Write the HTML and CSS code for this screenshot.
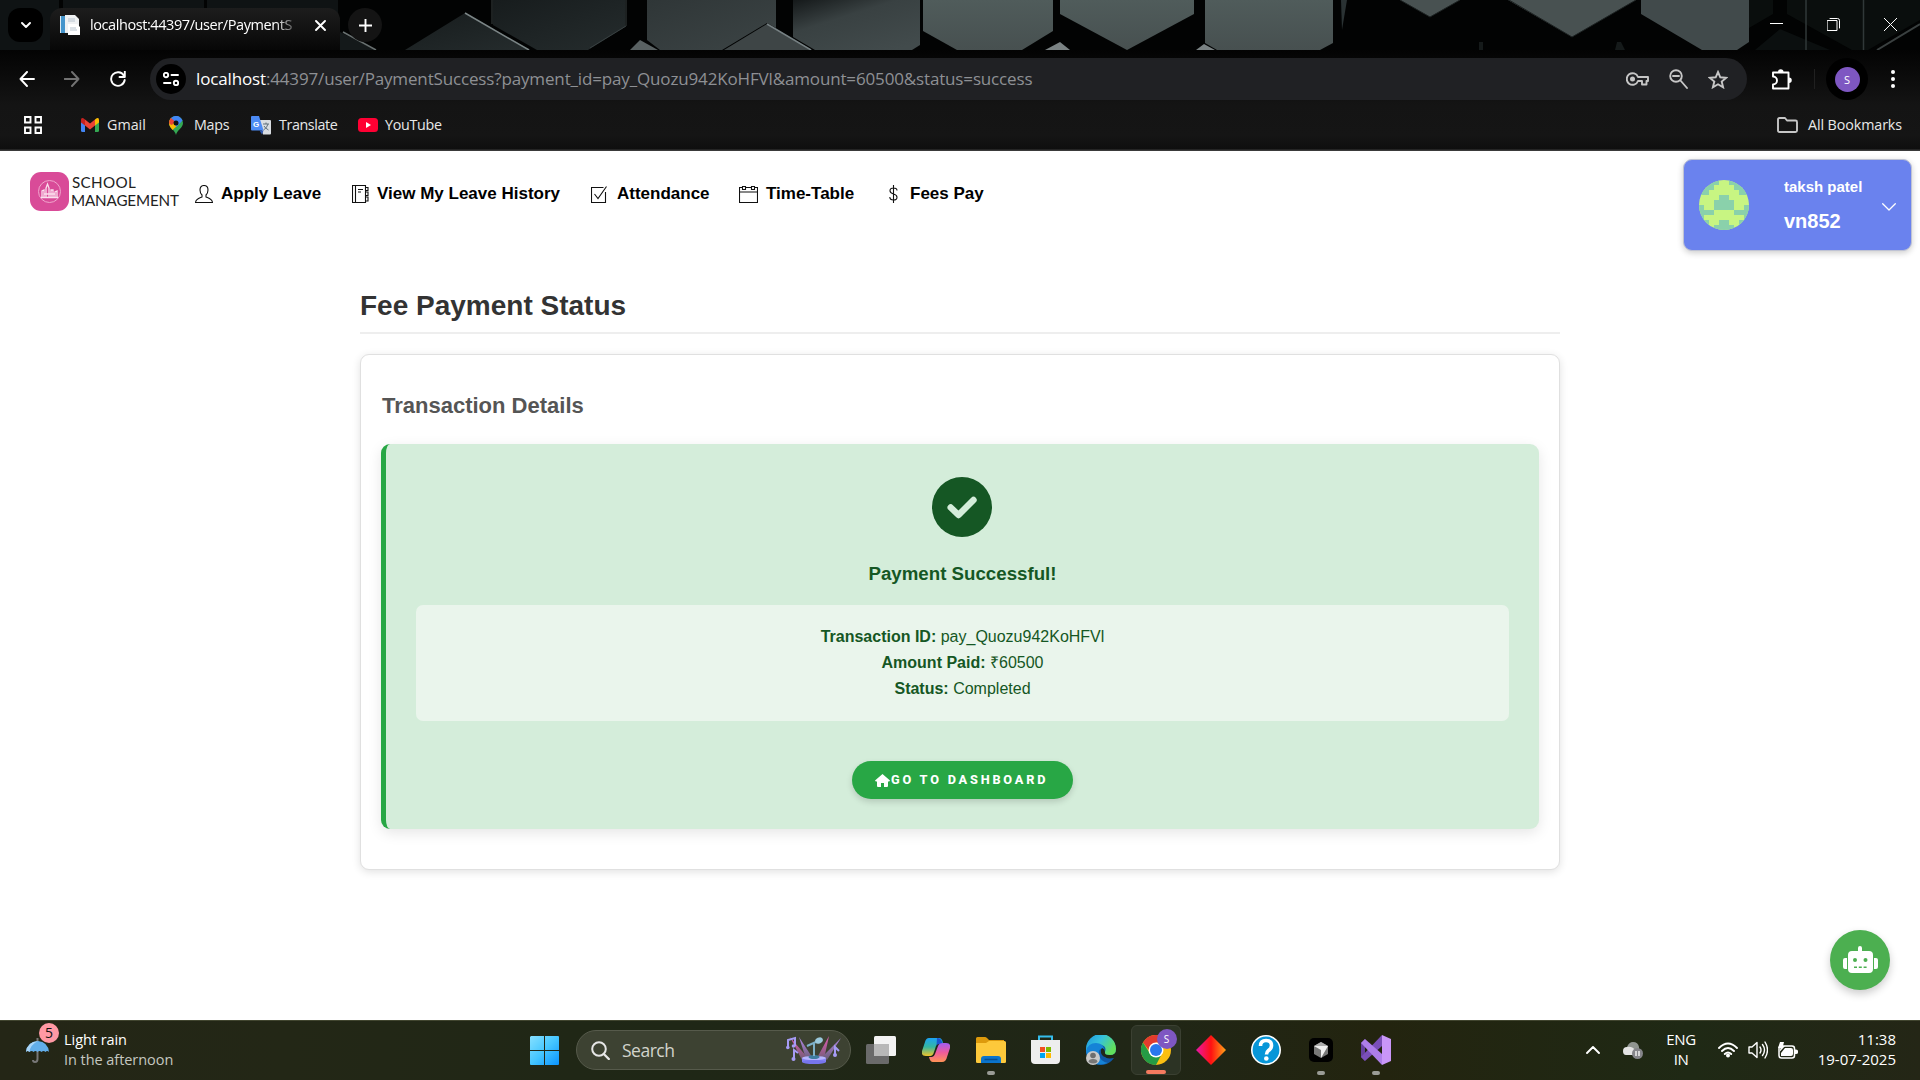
FILE: index.html
```html
<!DOCTYPE html>
<html lang="en">
<head>
<meta charset="utf-8">
<title>Fee Payment Status</title>
<link rel="stylesheet" href="styles.css">
</head>
<body>
<div class="screen">
  <header class="browser">
    <div class="tabstrip">
      <svg class="wallpaper" width="1920" height="50" viewBox="0 0 1920 50">
        <defs>
          <linearGradient id="w1" x1="0" y1="0" x2="1" y2="1"><stop offset="0" stop-color="#171c1d"/><stop offset="1" stop-color="#252c2d"/></linearGradient>
          <linearGradient id="w2" x1="0" y1="0" x2="1" y2="1"><stop offset="0" stop-color="#2f3637"/><stop offset="1" stop-color="#3c4445"/></linearGradient>
          <linearGradient id="w3" x1="0" y1="0" x2=".8" y2="1"><stop offset="0" stop-color="#15191a"/><stop offset=".4" stop-color="#394142"/><stop offset="1" stop-color="#424b4c"/></linearGradient>
          <linearGradient id="w4" x1="0" y1="0" x2="0" y2="1"><stop offset="0" stop-color="#505c5b"/><stop offset="1" stop-color="#475050"/></linearGradient>
        </defs>
        <rect width="1920" height="50" fill="#020303"/>
        <path d="M0 0H59V50H0zM63 0H204V50H63zM207 0H338V50H207z" fill="#0f1314"/>
        <path d="M340 32L376 50H340z" fill="#14191a"/><path d="M343 32L376 50" stroke="#687070" stroke-width="1.5"/>
        <path d="M405 50L465 13L530 50z" fill="url(#w1)"/><path d="M465 13L529 50" stroke="#7b8586" stroke-width="1.5"/>
        <path d="M493 0H625V27L588 50H537L493 25z" fill="url(#w1)"/><path d="M492 0V24M626 0V26L590 48" stroke="#384041" fill="none"/>
        <path d="M630 50L640 40L658 50z" fill="#596162"/>
        <path d="M647 0H776V28L767 23L722 50H660L647 40z" fill="url(#w2)"/>
        <path d="M724 50L767 24L812 50z" fill="#3e4546"/><path d="M767 24L811 50" stroke="#768083" stroke-width="1.5"/>
        <path d="M793 0H920V45L912 50H815L793 37z" fill="url(#w3)"/>
        <path d="M923 0H1053V31L1022 50H957L923 31z" fill="url(#w4)"/>
        <path d="M1060 0H1194V14L1127 50L1060 14z" fill="url(#w4)"/>
        <path d="M1045 50L1060 42L1070 50zM1196 50L1204 44L1215 50z" fill="#7a8283"/>
        <path d="M1205 0H1333V43L1320 50H1217L1205 43z" fill="url(#w4)"/>
        <path d="M1341 0H1347L1342 30z" fill="#2a3233"/>
        <path d="M1400 0H1460L1430 17zM1508 0H1636L1572 37z" fill="#485151"/><path d="M1509 0L1572 37L1636 0M1400 0L1430 17L1460 0" stroke="#1c2121" fill="none"/>
        <path d="M1479 42h4v8h-4zM1617 42l4 0 4 8h-10z" fill="#151a1a"/>
        <path d="M1641 0H1749V42L1737 50H1702L1641 14z" fill="#414a4b"/>
        <path d="M1749 0H1773V14L1749 28z" fill="#0a0e0d"/><path d="M1787 0H1920V20L1868 50H1852L1787 14z" fill="#0a0e0d"/><path d="M1755 50L1780 29L1830 50z" fill="#0b0f0f"/>
        <path d="M1806 0V50M1863.500 0V50" stroke="#303838" stroke-width="1.500"/><path d="M1877 50L1920 24" stroke="#3a4040" stroke-width="2"/>
      </svg>
      <div class="tabs">
        <span class="tab-search"><svg width="10" height="7" viewBox="0 0 10 7"><path d="M1 1l4 4 4-4" class="ln w2"/></svg></span>
        <div class="tab">
          <svg width="20" height="20" viewBox="0 0 20 20"><path d="M0 1h10v17H0z" fill="#dce9f2"/><path d="M1 1h4v17H1z" fill="#4595cc"/><path d="M5 0h10l4 4v13H5z" fill="#eff1f3"/><path d="M8 9h9l3 3v8H8z" fill="#fff"/><path d="M8 4h7M8 6h7M10 13h6M10 15h7" stroke="#b7c3ce"/></svg>
          <span class="tab-title">localhost:44397/user/PaymentS</span>
          <svg width="11" height="11" viewBox="0 0 11 11"><path d="M1 1l9 9M10 1l-9 9" class="ln w2"/></svg>
        </div>
        <span class="tab-new"><svg width="13" height="13" viewBox="0 0 13 13"><path d="M6.500 0v13M0 6.500h13" class="ln w2"/></svg></span>
      </div>
      <div class="winbtns">
        <svg width="13" height="13" viewBox="0 0 13 13"><path d="M0 5.500h13" class="ln"/></svg>
        <svg width="13" height="13" viewBox="0 0 13 13"><path d="M.5 2.500h9.500v10H.5zM3 .5h7.500q2 0 2 2V10" class="ln"/></svg>
        <svg width="13" height="13" viewBox="0 0 13 13"><path d="M0 0l13 13M13 0L0 13" class="ln"/></svg>
      </div>
    </div>
    <div class="toolbar">
      <svg class="back" width="16" height="16" viewBox="0 0 16 16"><path d="M15 8H1.500M8 1L1.500 8L8 15" class="ln w2"/></svg>
      <svg class="fwd" width="16" height="16" viewBox="0 0 16 16"><path d="M.5 8h14M8 1l6.500 7L8 15" class="ln w2"/></svg>
      <svg class="reload" width="16" height="16" viewBox="0 0 16 16"><path d="M13.800 4.500A6.800 6.800 0 1 0 14.700 9M14.800.5V6H9.500" class="ln w2"/></svg>
      <div class="omnibox">
        <span class="siteinfo"><svg width="16" height="14" viewBox="0 0 16 14"><circle cx="3" cy="3" r="2.200" class="ln w2"/><path d="M8.500 3H15M1 11h6.500" class="ln w2"/><circle cx="13" cy="11" r="2.200" class="ln w2"/></svg></span>
        <span class="url"><b>localhost</b>:44397/user/PaymentSuccess?payment_id=pay_Quozu942KoHFVl&amp;amount=60500&amp;status=success</span>
        <svg class="dim" width="23" height="14" viewBox="0 0 23 14"><path d="M12 5A5.800 5.800 0 1 0 12 9H16V12.500H20.500V9H22V5z" class="ln w2"/><circle cx="6.500" cy="7" r="2.500" fill="#c6c6c6"/></svg>
        <svg class="dim" width="19" height="20" viewBox="0 0 19 20"><circle cx="7" cy="7" r="5.800" class="ln w2"/><path d="M11.500 11.500L18 19M4 7h6" class="ln w2"/></svg>
        <svg class="dim" width="20" height="19" viewBox="0 0 20 19"><path d="M10 2l2.300 5.300 5.900.5-4.500 3.800 1.400 5.700L10 14.300l-5.100 3 1.400-5.700L1.800 7.800l5.900-.5z" class="ln w2 sharp"/></svg>
      </div>
      <svg class="puzzle" width="22" height="21" viewBox="0 0 22 21"><path d="M2 3.500H17.500V19.500H2V15.500A4 4 0 0 0 2 7.500z" class="ln w2"/><path d="M7 3a2.700 2.700 0 0 1 5.500 0zM18 8.500a2.700 2.700 0 0 1 0 5.500z" fill="#fff"/></svg>
      <span class="vsep"></span>
      <span class="account"><span>S</span></span>
      <svg width="4" height="18" viewBox="0 0 4 18"><g fill="#fff"><circle cx="2" cy="2" r="2"/><circle cx="2" cy="9" r="2"/><circle cx="2" cy="16" r="2"/></g></svg>
    </div>
    <div class="bookmarks">
      <svg class="apps" width="18" height="18" viewBox="0 0 18 18"><path d="M1 1h5.500v5.500H1zM11.500 1H17v5.500h-5.500zM1 11.500h5.500V17H1zM11.500 11.500H17V17h-5.500z" class="ln w2 sharp"/></svg>
      <a class="bm gmail"><svg width="18" height="14" viewBox="0 0 18 14"><path d="M0 2l4 3v9H1.500Q0 14 0 12.500z" fill="#4285f4"/><path d="M18 2l-4 3v9h2.500Q18 14 18 12.500z" fill="#34a853"/><path d="M14 1.500Q18-1.500 18 2v2.500L14 7.500z" fill="#fbbc04"/><path d="M0 2Q0-1.500 4 1.500V7.500L0 4.500z" fill="#c5221f"/><path d="M4 1.500L9 5.500l5-4v6L9 11.500 4 7.500z" fill="#ea4335"/></svg><span>Gmail</span></a>
      <a class="bm maps"><svg width="14" height="19" viewBox="0 0 14 19"><path d="M7 19C6 14 0 12 0 7a7 7 0 0 1 14 0c0 5-6 7-7 12z" fill="#34a853"/><path d="M0 7a7 7 0 0 1 2-5l7 7-5.500 5C2 12 0 10 0 7z" fill="#fbbc04"/><path d="M2 2a7 7 0 0 1 11.500 2.500L7.500 11 4 6z" fill="#4285f4"/><path d="M2 2l4 3.500-3 3.500L.5 8Q-.5 4.500 2 2z" fill="#ea4335"/><circle cx="7" cy="7" r="2.500" fill="#111"/></svg><span>Maps</span></a>
      <a class="bm translate"><svg width="20" height="19" viewBox="0 0 20 19"><path d="M8 4h11q1 0 1 1v12.500q0 1-1 1h-7z" fill="#d9dde2"/><path d="M1 0h7l4.500 14.500H1q-1 0-1-1V1q0-1 1-1z" fill="#4c8bf5"/><path d="M8.500 14.500h4L11 18.500z" fill="#3058b0"/><path d="M12 8h6M15 6.500V8M17 8q-1 4-4.500 6M13 10q1 2 4.500 4" stroke="#60717d" fill="none"/><text x="2" y="11" class="tg">G</text></svg><span>Translate</span></a>
      <a class="bm youtube"><svg width="20" height="14" viewBox="0 0 20 14"><rect width="20" height="14" rx="3.500" fill="#ff0033"/><path d="M8 4l5 3-5 3z" fill="#fff"/></svg><span>YouTube</span></a>
      <a class="bm all"><svg width="21" height="16" viewBox="0 0 21 16"><path d="M1 2.500Q1 1 2.500 1H8l2 2.500h8.500Q20 3.500 20 5v8.500Q20 15 18.500 15h-16Q1 15 1 13.500z" class="ln w2 grey"/></svg><span>All Bookmarks</span></a>
    </div>
  </header>

  <main class="page">
    <nav class="nav">
      <div class="brand">
        <svg width="39" height="39" viewBox="0 0 39 39"><rect width="39" height="39" rx="11" fill="#d94b98"/><circle cx="19.500" cy="19.500" r="11" fill="none" stroke="#f0a6cd"/><path d="M12 25v-6l2-1v7M16 25v-9l1.500-4 1.500 4v9M21 25v-7h2v7M25 25v-5l2-1v6M11 25.500h17M14 22h11" stroke="#fbe0ee" fill="none" stroke-width="1.300"/></svg>
        <div class="brand-name"><span>SCHOOL</span><span>MANAGEMENT</span></div>
      </div>
      <a class="link leave"><svg width="18" height="18" viewBox="0 0 18 18"><path d="M9 .5c3 0 4 2 4 4.500 0 2-1 4-2 5v2c2 1 6 1.500 6.500 5.500H.5C1 13.500 5 13 7 12v-2C6 9 5 7 5 5 5 2.500 6 .5 9 .5z" class="ic"/></svg><span>Apply Leave</span></a>
      <a class="link hist"><svg width="17" height="18" viewBox="0 0 17 18"><path d="M.5.5h13v17H.5zM3.500.5v17M13.500 2.500h2.500v3h-2.500M13.500 7h2.500v3.500h-2.500M13.500 12h2.500v4h-2.500M6 4.500h5M6 7h3" class="ic"/></svg><span>View My Leave History</span></a>
      <a class="link att"><svg width="17" height="17" viewBox="0 0 17 17"><path d="M12.500 1.500H.5v15h14V6M3.500 8l3.500 4.500L15.500.5" class="ic"/></svg><span>Attendance</span></a>
      <a class="link time"><svg width="19" height="17" viewBox="0 0 19 17"><path d="M.5 1.500h18v15H.5zM.5 6h18" class="ic"/><path d="M3.500.5h3v3h-3zM12.500.5h3v3h-3z" class="ic wf"/></svg><span>Time-Table</span></a>
      <a class="link fees"><svg width="9" height="18" viewBox="0 0 9 18"><path d="M4.500 0v18M8 5.500Q8 3 4.500 3 1 3 1 5.800 1 8 4.500 9 8 10 8 12.200 8 15 4.500 15 .8 15 .8 12" class="ic"/></svg><span>Fees Pay</span></a>
      <div class="profile">
        <svg class="avatar" width="50" height="50" viewBox="0 0 10 10" shape-rendering="crispEdges"><path fill="#c8f582" d="M0 0h10v10H0z"/><path fill="#8ad1ab" d="M0 0h4v1H3v1H2v1H0zM10 0H6v1h1v1h1v1h2zM4 3h2v1h1v2H3V4h1zM0 5h1v1h1v1H1v1H0zM10 5H9v1H8v1h1v1h1zM2 6h1v1H2zM7 6h1v1H7zM4 8h2v1h1v1H3V9h1zM1 8h1v1H1zM8 8h1v1H8z"/></svg>
        <div class="who"><span class="uname">taksh patel</span><span class="uid">vn852</span></div>
        <svg class="chev" width="14" height="8" viewBox="0 0 14 8"><path d="M.7.7L7 7 13.300.7" class="ln" stroke-width="1.300"/></svg>
      </div>
    </nav>
    <section class="content">
      <h1>Fee Payment Status</h1>
      <div class="card">
        <h2>Transaction Details</h2>
        <div class="success">
          <svg class="check" width="60" height="60" viewBox="0 0 60 60"><circle cx="30" cy="30" r="30" fill="#155724"/><path d="M18.700 30.500l7.800 7.500L41.500 23" fill="none" stroke="#d4edda" stroke-width="6.400" stroke-linecap="round" stroke-linejoin="round"/></svg>
          <h3>Payment Successful!</h3>
          <div class="details">
            <p><strong>Transaction ID:</strong> pay_Quozu942KoHFVl</p>
            <p><strong>Amount Paid:</strong> ₹60500</p>
            <p><strong>Status:</strong> Completed</p>
          </div>
          <a class="btn"><svg width="15" height="13" viewBox="0 0 15 13"><path d="M7.500 0L15 6.500l-.8 1H13V12q0 1-1 1H9V9H6v4H3q-1 0-1-1V7.500H.8L0 6.500z" fill="#fff"/></svg><span>GO TO DASHBOARD</span></a>
        </div>
      </div>
    </section>
    <div class="chatbot"><svg width="35" height="28" viewBox="0 0 35 28"><path fill="#fff" d="M9 5h6V2a2 2 0 0 1 4 0v3h7q4 0 4 4v14q0 4-4 4H9q-4 0-4-4V9q0-4 4-4zM4 12v11H2q-2 0-2-2v-7q0-2 2-2zM31 12v11h2q2 0 2-2v-7q0-2-2-2z"/><g fill="#4caf50"><circle cx="12" cy="14" r="2"/><circle cx="22.500" cy="14" r="2"/><path d="M11 20.500h3v1.500h-3zM15.800 20.500h3v1.500h-3zM20.600 20.500h3v1.500h-3z"/></g></svg></div>
  </main>

  <footer class="taskbar">
    <div class="weather">
      <div class="umbrella"><svg width="24" height="29" viewBox="0 0 24 29"><path d="M11.500 2v21q0 3-2.500 3-2 0-2-2" fill="none" stroke="#777" stroke-width="2"/><path d="M0 16Q1 6 12 5q10 1 11 11-2-2-3.500 0-2-2-4 0-2-2-4 0-2-2-4 0-2-2-4 0Q1.500 14 0 16z" fill="#62aeea"/><path d="M0 16Q1 6 12 5 4 9 3.500 16 1.500 14 0 16z" fill="#a9d5f8"/></svg><span class="badge">5</span></div>
      <div class="wtext"><span>Light rain</span><span class="w-sub">In the afternoon</span></div>
    </div>
    <div class="apps-row">
      <svg width="29" height="29" viewBox="0 0 29 29"><defs><linearGradient id="win" x1="0" y1="0" x2="1" y2="1"><stop offset="0" stop-color="#86e0ff"/><stop offset=".5" stop-color="#45c6ff"/><stop offset="1" stop-color="#0a93ff"/></linearGradient></defs><path fill="url(#win)" d="M1 0h13v14H0V1zM15 0h13q1 0 1 1v13H15zM0 15h14v14H1q-1 0-1-1zM15 15h14v13q0 1-1 1H15z"/></svg>
      <div class="search">
        <svg width="19" height="19" viewBox="0 0 19 19"><circle cx="8" cy="8" r="6.800" fill="none" stroke="#e6e6e6" stroke-width="2"/><path d="M12.800 13l5 5" stroke="#e6e6e6" stroke-width="2.400" stroke-linecap="round"/></svg>
        <span>Search</span>
        <svg width="56" height="28" viewBox="0 0 56 28"><defs><linearGradient id="beam" x1="0" y1="0" x2="0" y2="1"><stop offset="0" stop-color="#e45bb5"/><stop offset="1" stop-color="#6f5d75"/></linearGradient><linearGradient id="beam2" x1="0" y1="0" x2="0" y2="1"><stop offset="0" stop-color="#b488e8"/><stop offset="1" stop-color="#695a72"/></linearGradient></defs><path d="M4 1l17 20-5 3zM43 0L32 20l6 3z" fill="url(#beam)"/><path d="M13 1l13 20-6 2zM55 2L36 21l5 3z" fill="url(#beam2)"/><path d="M16 22h24v4H16z" fill="#8582f6"/><ellipse cx="28" cy="26" rx="12" ry="2" fill="#7775ed"/><ellipse cx="28" cy="22" rx="12" ry="2" fill="#b6b5ff"/><ellipse cx="28" cy="21" rx="5.500" ry="2" fill="#3f7da0"/><path d="M28 20V6M21 10l11-5" stroke="#7db0c8" stroke-width="2"/><ellipse cx="33" cy="4.500" rx="4" ry="3" fill="#9bc9dc" transform="rotate(-25 33 4.500)"/><g fill="none" stroke="#a69bf5" stroke-width="2"><path d="M2 11V4l7-2v8M8 23V14l4 3M49 20V11l4 4"/></g><g fill="#a69bf5"><circle cx="1.800" cy="11.500" r="1.800"/><circle cx="7.500" cy="10" r="1.800"/><circle cx="7.500" cy="23" r="2"/><circle cx="49" cy="19" r="2"/></g></svg>
      </div>
      <div class="ticon"><svg width="30" height="30" viewBox="0 0 30 30"><rect y="9" width="23" height="20" rx="1.500" fill="#6a6a6a"/><rect x="8" y="1" width="22" height="20" rx="1.500" fill="#f3f3f3"/><path d="M8 9h15v12H9.500Q8 21 8 19.500z" fill="#b8b8b8"/></svg></div>
      <div class="ticon"><svg width="28" height="26" viewBox="0 0 28 26"><defs><linearGradient id="cp1" x1="0" y1="0" x2="0" y2="1"><stop offset="0" stop-color="#1ca3f4"/><stop offset=".5" stop-color="#35b6a0"/><stop offset="1" stop-color="#f2c52a"/></linearGradient><linearGradient id="cp2" x1="0" y1="0" x2="0" y2="1"><stop offset="0" stop-color="#a45cf2"/><stop offset=".5" stop-color="#ef5b9c"/><stop offset="1" stop-color="#ff9355"/></linearGradient></defs><path d="M7 1h10q3 0 4 5h-4q-2 0-3 3l-2 6q-1 4-4 4H4q-5 0-4-5L3 5q1-4 4-4z" fill="url(#cp1)"/><path d="M15 1q4 0 5 4l1 2h-4q-2 0-2.500 2z" fill="#1b54cf"/><path d="M21 6h3q5 0 4 5l-3 9q-1 5-5 5H11q-3 0-4-5h3q2 0 3-3l3-8q1-3 5-3z" fill="url(#cp2)"/></svg></div>
      <div class="ticon run"><svg width="30" height="27" viewBox="0 0 30 27"><path d="M0 1.500Q0 0 1.500 0H9q1 0 2 1l2 2h15v8H0z" fill="#dd9a0c"/><path d="M1 6h9l3-2h15.500Q30 4 30 5.500V25q0 1-1.500 1h-27Q0 26 0 25V6z" fill="#fdc93b"/><path d="M5 26v-4q0-3 3-3h14q3 0 3 3v4z" fill="#0b74cc"/><path d="M8.500 22.500h13" stroke="#064e92" stroke-width="1.500"/></svg></div>
      <div class="ticon"><svg width="29" height="30" viewBox="0 0 29 30"><path d="M8 6V1.500h13V6" fill="none" stroke="#35bdec" stroke-width="2"/><path d="M0 5h29v20q0 4-4 4H4q-4 0-4-4z" fill="#eee"/><path d="M9 12h5v5H9z" fill="#f25022"/><path d="M15 12h5v5h-5z" fill="#7fba00"/><path d="M9 18h5v5H9z" fill="#00a4ef"/><path d="M15 18h5v5h-5z" fill="#ffb900"/></svg></div>
      <div class="ticon"><svg width="30" height="30" viewBox="0 0 30 30"><defs><linearGradient id="ed" x1="0" y1="0" x2="1" y2=".5"><stop offset="0" stop-color="#1d95dd"/><stop offset=".5" stop-color="#35c1dd"/><stop offset="1" stop-color="#62e05c"/></linearGradient></defs><path d="M0 15A15 15 0 0 1 30 14q0 6-6 6-5 0-4-3-4 8 8 6Q23 30 15 30A15 15 0 0 1 0 15z" fill="#0f58a6"/><path d="M0 14A15 15 0 0 1 30 14q0 6-6 6-6 0-5-3 2-6-4-7-9-1-15 8z" fill="url(#ed)"/><path d="M0 16q2-8 10-8 7 0 8 6-5-1-5 4 0 8 9 10Q2 34 0 16z" fill="#1583d7"/><path d="M16 13q-2 2-1 5 2 6 12 4 2-1 1-1-9 3-9-3 0-4-3-5z" fill="#202718"/><circle cx="7" cy="23" r="7" fill="#c9c9c9"/><circle cx="7" cy="20.500" r="2.800" fill="#6e6e6e"/><path d="M2.500 27q0-3 4.500-3t4.500 3q-4 3-9 0z" fill="#777"/></svg></div>
      <div class="ticon active"><svg width="30" height="30" viewBox="0 0 30 30"><circle cx="15" cy="15" r="15" fill="#fbbf12"/><path d="M2 7.500A15 15 0 0 1 28 7.500H15L10 18z" fill="#e33b2e"/><path d="M2 7.500A15 15 0 0 0 15 30l6-11.500H9z" fill="#259b45"/><circle cx="15" cy="15" r="7.500" fill="#fff"/><circle cx="15" cy="15" r="6" fill="#2a77ed"/></svg><span class="cbadge">S</span></div>
      <div class="ticon"><svg width="30" height="30" viewBox="0 0 30 30"><defs><linearGradient id="dia"><stop offset="0" stop-color="#e817a8"/><stop offset=".5" stop-color="#ff1111"/><stop offset="1" stop-color="#ffa318"/></linearGradient></defs><path d="M15 0l15 15-15 15L0 15z" fill="url(#dia)"/></svg></div>
      <div class="ticon"><svg width="30" height="30" viewBox="0 0 30 30"><circle cx="15" cy="15" r="14.200" fill="#0796d8" stroke="#fff" stroke-width="1.600"/><path d="M9.500 11q0-5.500 5.500-5.500t5.500 5q0 3-3 5-2 1.500-2 4" fill="none" stroke="#fff" stroke-width="3.600"/><circle cx="15.300" cy="23.500" r="2.300" fill="#fff"/></svg></div>
      <div class="ticon run"><svg width="24" height="24" viewBox="0 0 24 24"><rect width="24" height="24" rx="5" fill="#000"/><path d="M12 4l7 4v8l-7 4-7-4V8z" fill="#777"/><path d="M5 8h14l-7 12v-8z" fill="#eee"/><path d="M12 4l7 4H5z" fill="#aaa"/></svg></div>
      <div class="ticon run"><svg width="30" height="30" viewBox="0 0 30 30"><path d="M0 8l4-4v22l-4-4z" fill="#66409f"/><path d="M21 0L0 22l4 4L21 11z" fill="#7a4fb8"/><path d="M21 0l9 4v22l-9 4z" fill="#c996f8"/><path d="M4 4L0 8l21 22V19z" fill="#ad7ee9"/></svg></div>
    </div>
    <div class="tray">
      <svg class="t-up" width="14" height="8" viewBox="0 0 14 8"><path d="M1 7l6-6 6 6" class="ln w2"/></svg>
      <svg class="t-cloud" width="20" height="17" viewBox="0 0 20 17"><path d="M4 5Q6 0 10 0q5 0 6 5v6H4z" fill="#909590"/><path d="M3 13q-3 0-3-4t4-4q5-1 8 3v5z" fill="#e4e4e4"/><circle cx="14.500" cy="11.500" r="5.500" fill="#85858a"/><path d="M13 9v5M16 9v5" stroke="#fff" stroke-width="1.300"/></svg>
      <div class="lang"><span>ENG</span><span>IN</span></div>
      <svg class="t-wifi" width="20" height="16" viewBox="0 0 20 16"><path d="M1 6q9-9 18 0M4 9q6-6 12 0M6.800 12q3.200-3 6.400 0" class="ln w2"/><circle cx="10" cy="13.500" r="2" fill="#fff"/></svg>
      <svg class="t-vol" width="20" height="18" viewBox="0 0 20 18"><path d="M1 6h3l5-4.500v15L4 12H1zM12 6q2 3 0 6M14.500 3.500q4 5.500 0 11M17 1q5 8 0 16" class="ln" stroke-width="1.400"/></svg>
      <svg class="t-bat" width="20" height="17" viewBox="0 0 20 17"><rect x="1" y="4" width="15.500" height="12" rx="2.500" class="ln" stroke-width="1.500"/><path d="M3 14V11l4-5h6q2 0 2 2v4q0 2-2 2zM17 7.500h1q2 0 2 1.500v1.500q0 1.500-2 1.500h-1z" fill="#fff"/><path d="M2 0h4L5 4h2L1.500 10 2.500 6H0z" fill="#fff"/></svg>
      <div class="clock"><span>11:38</span><span>19-07-2025</span></div>
    </div>
  </footer>
</div>
</body>
</html>
```
FILE: styles.css
```css
* { box-sizing: border-box; }
body { margin: 0; background: #fff; font-family: "Liberation Sans", Arial, sans-serif; }
svg { display: block; flex: none; }
h1, h2, h3, p { margin: 0; }
.ln { fill: none; stroke: #fff; stroke-linejoin: round; stroke-linecap: round; }
.w2 { stroke-width: 1.9; }
.sharp { stroke-linejoin: miter; }
.dim .ln, .ln.grey { stroke: #c6c6c6; }
.screen { width: 1920px; height: 1080px; display: flex; flex-direction: column; overflow: hidden; }

/* browser */
.browser { height: 151px; flex: none; font-family: "Open Sans", "Noto Sans", sans-serif; color: #e8e8e8; background: linear-gradient(#030303 50px, #070707 62px, #141414 105px, #151515 135px, #0e0e0e 149px, #3a3a3a 150px); }
.tabstrip { position: relative; height: 50px; display: flex; justify-content: space-between; }
.wallpaper { position: absolute; left: 0; top: 0; }
.tabs { position: relative; display: flex; align-items: flex-start; padding: 8px 0 0 8px; }
.tab-search { width: 35px; height: 34px; border-radius: 12px; background: #000; display: flex; align-items: center; justify-content: center; margin-right: 7px; }
.tab { width: 290px; height: 42px; border-radius: 12px 12px 0 0; background: linear-gradient(#1d1d1d, #070707); display: flex; align-items: flex-start; padding: 7px 14px 0 10px; }
.tab > svg:last-child { margin-top: 5px; margin-left: 12px; }
.tab-title { margin-left: 10px; width: 213px; white-space: nowrap; font-size: 14.500px; line-height: 20px; letter-spacing: -.42px; color: #fff; -webkit-mask-image: linear-gradient(90deg, #000 185px, transparent 211px); mask-image: linear-gradient(90deg, #000 185px, transparent 211px); }
.tab-new { width: 34px; height: 34px; border-radius: 17px; background: #141414; display: flex; align-items: center; justify-content: center; margin-left: 8px; }
.winbtns { position: relative; display: flex; gap: 44px; padding: 18px 23px 0 0; }
.toolbar { height: 58px; display: flex; align-items: center; padding: 0 25px 0 19px; }
.fwd { margin-left: 29px; opacity: .42; }
.reload { margin-left: 30px; }
.omnibox { width: 1597px; height: 42px; margin-left: 24px; border-radius: 21px; background: #202124; display: flex; align-items: center; padding: 0 19px 0 6px; gap: 20px; }
.siteinfo { width: 30px; height: 30px; border-radius: 50%; background: #000; display: flex; align-items: center; justify-content: center; }
.url { flex: 1; margin-left: -10px; font-size: 17px; letter-spacing: -.15px; line-height: 24px; color: #8e9094; white-space: nowrap; }
.url b { color: #fff; font-weight: 400; }
.puzzle { margin-left: 24px; }
.vsep { width: 1px; height: 20px; background: #202020; margin-left: 21px; }
.account { width: 42px; height: 42px; border-radius: 50%; background: #000; margin: 0 23px 0 11px; display: flex; align-items: center; justify-content: center; }
.account span { width: 25px; height: 25px; border-radius: 50%; background: #7e57c2; color: #fff; font-size: 11px; line-height: 25px; text-align: center; }
.bookmarks { height: 34px; display: flex; align-items: center; padding: 0 18px 0 24px; font-size: 14.300px; }
.bm { display: flex; align-items: center; letter-spacing: -.3px; white-space: nowrap; }
.bm span { line-height: 20px; }
.gmail { margin-left: 39px; gap: 8px; width: 88px; }
.gmail span { letter-spacing: 0; }
.maps { gap: 11px; width: 82px; }
.translate { gap: 8px; width: 107px; letter-spacing: -.4px; }
.youtube { gap: 7px; }
.all { margin-left: auto; gap: 10px; letter-spacing: -.1px; }
.tg { font: bold 8px "Liberation Sans", sans-serif; fill: #fff; }

/* page */
.page { position: relative; height: 869px; flex: none; background: #fff; }
.nav { display: flex; align-items: flex-start; padding: 8px 8px 0 30px; height: 104px; font-size: 17px; font-weight: bold; color: #000; white-space: nowrap; }
.brand { display: flex; gap: 2px; width: 165px; padding-top: 13px; }
.brand-name { display: flex; flex-direction: column; font: 400 15.200px/18px Lato, sans-serif; color: #222; padding-top: 1px; }
.brand-name span:first-child { margin-left: 1px; letter-spacing: .35px; }
.brand-name span:last-child { letter-spacing: -.15px; }
.link { display: flex; align-items: center; height: 36px; margin-top: 17px; }
.ic { fill: none; stroke: #111; stroke-width: 1.1; }
.wf { fill: #fff; }
.leave { gap: 8px; width: 157px; }
.hist { gap: 8px; width: 239px; }
.att { gap: 9px; width: 148px; }
.time { gap: 8px; width: 150px; }
.fees { gap: 12px; }
.profile { margin-left: auto; width: 229px; height: 92px; border: 1px solid #bfc3d4; border-radius: 9px; background: #6a82ee; box-shadow: 0 2px 6px rgba(0,0,0,.2); color: #fff; display: flex; align-items: center; padding: 0 15px 0 15px; }
.avatar { border-radius: 50%; }
.who { display: flex; flex-direction: column; gap: 11px; margin-left: 35px; flex: 1; padding-top: 1px; }
.uname { font-size: 15px; line-height: 20px; }
.uid { font-size: 20px; line-height: 26px; }
.chev { margin-top: 4px; }
.content { width: 1200px; margin: 0 auto; padding-top: 27px; }
h1 { font-size: 28px; line-height: 48px; color: #333; border-bottom: 2px solid #eee; height: 52px; }
.card { margin-top: 20px; height: 516px; border: 1px solid #e0e0e0; border-radius: 9px; background: #fff; box-shadow: 0 2px 9px rgba(0,0,0,.12); padding: 34px 20px 0; }
h2 { font-size: 22px; line-height: 33px; height: 55px; color: #555; padding-left: 1px; }
.success { height: 385px; border-left: 5px solid #28a745; border-radius: 9px; background: #d4edda; box-shadow: 0 4px 14px rgba(0,0,0,.1); padding: 33px 30px 0; display: flex; flex-direction: column; align-items: center; color: #155724; }
.check { margin-right: 1px; }
h3 { font-size: 18.700px; line-height: 26px; margin-top: 24px; }
.details { align-self: stretch; height: 116px; margin-top: 18px; border-radius: 7px; background: #eaf5ec; padding: 19px 0 0; text-align: center; font-size: 16px; line-height: 26px; }
.btn { margin-top: 40px; width: 221px; height: 38px; border-radius: 19px; background: #28a745; box-shadow: 0 3px 6px rgba(0,0,0,.15); display: flex; align-items: center; padding-left: 23px; gap: 1px; color: #fff; font: 800 12.700px/16px Roboto, sans-serif; letter-spacing: 2.800px; white-space: nowrap; }
.chatbot { position: absolute; right: 30px; bottom: 30px; width: 60px; height: 60px; border-radius: 50%; background: #4caf50; box-shadow: 0 4px 8px rgba(0,0,0,.2); display: flex; align-items: center; justify-content: center; }

/* taskbar */
.taskbar { height: 60px; flex: none; border-top: 1px solid #41452f; background: linear-gradient(90deg, #242616, #232716 15%, #1f2716 35%, #202616 60%, #23240f 72%, #1f2915 88%, #242616); display: flex; align-items: center; justify-content: space-between; padding: 0 24px 1px 26px; font-family: "Open Sans", "Noto Sans", sans-serif; color: #fff; }
.weather { display: flex; width: 504px; gap: 14px; }
.umbrella { position: relative; width: 24px; height: 29px; margin-top: 6px; }
.badge { position: absolute; left: 13px; top: -13px; width: 20px; height: 20px; border-radius: 50%; background: #ff99a4; color: #111; font-size: 14px; line-height: 20px; text-align: center; }
.wtext { display: flex; flex-direction: column; font-size: 14.500px; line-height: 20px; letter-spacing: -.05px; white-space: nowrap; }
.w-sub { color: #c5c7c0; }
.apps-row { display: flex; align-items: center; }
.search { width: 275px; height: 40px; margin: 0 2px 0 17px; border: 1px solid #565a4b; border-radius: 20px; background: #3d4232; display: flex; align-items: center; padding: 0 8px 0 14px; font-size: 17.500px; letter-spacing: -.5px; color: #d2d4cc; }
.search span { margin-left: 12px; flex: 1; }
.ticon { position: relative; width: 55px; height: 50px; display: flex; align-items: center; justify-content: center; }
.run::after, .active::after { content: ""; position: absolute; bottom: 0; left: 50%; width: 8px; height: 4px; margin-left: -4px; border-radius: 2px; background: #9a9c96; }
.active { width: 50px; margin: 0 2.500px; border: 1px solid #3b4032; border-radius: 6px; background: #2c3324; }
.active::after { width: 20px; margin-left: -10px; background: #f47a5f; }
.cbadge { position: absolute; right: 3px; top: 3px; width: 20px; height: 20px; border-radius: 50%; background: #7e57c2; font-size: 10px; line-height: 20px; text-align: center; }
.tray { margin-left: auto; display: flex; align-items: center; font-size: 15px; line-height: 20px; letter-spacing: -.4px; }
.lang, .clock { display: flex; flex-direction: column; padding-bottom: 2px; }
.lang { align-items: center; width: 30px; margin: 0 22px 0 23px; }
.t-cloud { margin-left: 23px; }
.t-vol, .t-bat { margin-left: 10px; }
.clock { align-items: flex-end; width: 98px; letter-spacing: 0; }
```
